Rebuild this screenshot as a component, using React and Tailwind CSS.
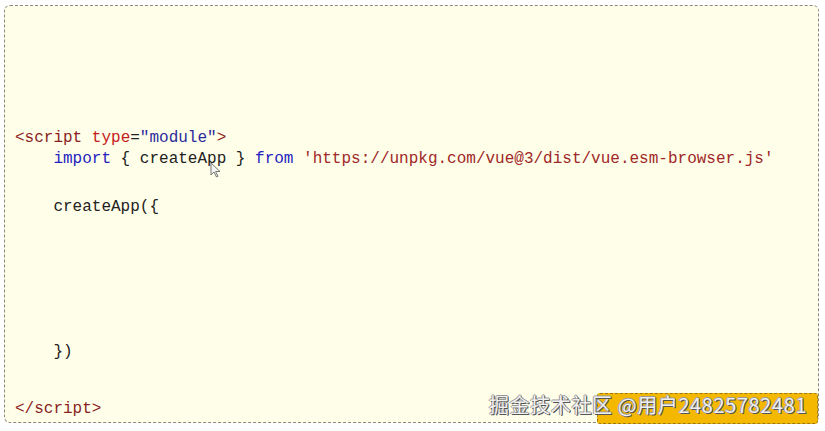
import React from "react";

const mono = { fontFamily: '"Liberation Mono", "DejaVu Sans Mono", monospace' };

function App() {
  return (
    <div className="relative w-[825px] h-[431px] bg-white overflow-hidden">
      {/* code box */}
      <div
        className="absolute left-[4px] top-[5px] w-[815px] h-[418px] border border-dashed border-[#8a8a80] rounded-[6px] bg-[#fffee9]"
      >
        <div
          className="flex flex-col pl-[10px] text-[16px] leading-[21px] whitespace-pre text-[#222]"
          style={mono}
        >
          <div className="mt-[122px]">
            <span className="text-[#8a1f1f]">&lt;script</span>{" "}
            <span className="text-[#c42020]">type</span>
            <span>=</span>
            <span className="text-[#2b2b9c]">"module"</span>
            <span className="text-[#8a1f1f]">&gt;</span>
          </div>
          <div>
            {"    "}
            <span className="text-[#2323c0]">import</span>
            {" { createApp } "}
            <span className="text-[#2323c0]">from</span>{" "}
            <span className="text-[#a02828]">
              'https://unpkg.com/vue@3/dist/vue.esm-browser.js'
            </span>
          </div>
          <div className="mt-[27px]">{"    createApp({"}</div>
          <div className="mt-[124px]">{"    })"}</div>
          <div className="mt-[36px] text-[#8a1f1f]">&lt;/script&gt;</div>
        </div>
      </div>

      {/* mouse cursor */}
      <svg
        className="absolute left-[210px] top-[162px]"
        width="12"
        height="17"
        viewBox="0 0 12 17"
      >
        <path
          d="M1 1 L1 13 L4 10 L6.5 15 L8 14.3 L5.6 9.5 L10 9.5 Z"
          fill="#f4f4f4"
          stroke="#777"
          strokeWidth="1"
        />
      </svg>

      {/* orange badge */}
      <div className="absolute left-[597px] top-[393px] w-[221px] h-[31px] bg-[#f5b800] border border-dashed border-[#9a7a10] rounded-[3px]" />

      {/* watermark */}
      <div
        className="absolute left-[489px] top-[391px] text-[20px] leading-[28px] tracking-[0.6px] text-[#f0f0f0] whitespace-nowrap"
        style={{
          fontFamily: '"Noto Sans CJK SC", "Noto Sans", sans-serif',
          textShadow:
            "1px 1px 0 #555, -1px 0 0 #999, 0 -1px 0 #999, 1px 0 0 #777",
        }}
      >
        掘金技术社区 @用户24825782481
      </div>
    </div>
  );
}

export default App;
